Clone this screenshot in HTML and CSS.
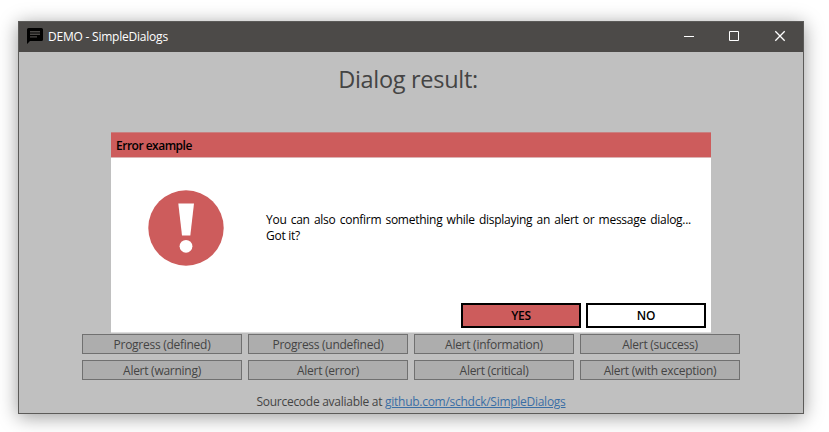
FILE: index.html
```html
<!DOCTYPE html>
<html lang="en">
<head>
<meta charset="utf-8">
<title>DEMO - SimpleDialogs</title>
<link rel="stylesheet" href="styles.css">
</head>
<body>
<main class="window">
  <header class="titlebar">
    <svg class="app-icon" width="16" height="16" viewBox="0 0 16 16"><path d="M1.500 0h13A1.500 1.500 0 0 1 16 1.500v10A1.500 1.500 0 0 1 14.500 13H3l-3 3V1.500A1.500 1.500 0 0 1 1.500 0z" fill="#000"/><path d="M3 3.700h10M3 6.300h10M3 8.900h7" stroke="#4c4a48" stroke-width="1.400"/></svg>
    <span class="app-title">DEMO - SimpleDialogs</span>
    <div class="controls">
      <svg width="46" height="30" viewBox="0 0 46 30"><path d="M18 14.500h10" stroke="#fff"/></svg>
      <svg width="46" height="30" viewBox="0 0 46 30"><path d="M17.500 9.500h9v9h-9z" stroke="#fff" fill="none"/></svg>
      <svg width="46" height="30" viewBox="0 0 46 30"><path d="M17.300 9.300l9.400 9.400M26.700 9.300l-9.400 9.400" stroke="#fff" stroke-width="1.300"/></svg>
    </div>
  </header>
  <section class="content">
    <h1 class="result">Dialog result:</h1>
    <div class="actions">
      <button>Progress (defined)</button>
      <button>Progress (undefined)</button>
      <button>Alert (information)</button>
      <button>Alert (success)</button>
      <button>Alert (warning)</button>
      <button>Alert (error)</button>
      <button>Alert (critical)</button>
      <button>Alert (with exception)</button>
    </div>
    <p class="source">Sourcecode avaliable at <a href="#">github.com/schdck/SimpleDialogs</a></p>
  </section>
  <section class="dialog">
    <h2 class="dialog-title">Error example</h2>
    <div class="dialog-body">
      <svg class="alert-icon" width="76" height="76" viewBox="0 0 76 76"><circle cx="38" cy="38" r="37.700" fill="#cd5c5c"/><path d="M30.300 13.500h15.700l-3.700 32h-8.300z" fill="#fff"/><circle cx="38" cy="56.300" r="6.400" fill="#fff"/></svg>
      <p class="message"><span class="line">You can also confirm something while displaying an alert or message dialog...</span><span class="last">Got it?</span></p>
    </div>
    <div class="dialog-buttons">
      <button class="yes">YES</button>
      <button class="no">NO</button>
    </div>
  </section>
</main>
</body>
</html>
```
FILE: styles.css
```css
* { box-sizing: border-box; }
body {
  margin: 0;
  padding: 21px 0 0 18px;
  height: 432px;
  overflow: hidden;
  background: #fff;
  font-family: "Open Sans", "Noto Sans", sans-serif;
  font-size: 12px;
  letter-spacing: -0.27px;
}
button { font: inherit; letter-spacing: inherit; padding: 0; margin: 0; border-radius: 0; }
h1, h2, p { margin: 0; font-weight: 400; }
.window {
  position: relative;
  display: flex;
  flex-direction: column;
  width: 786px;
  height: 393px;
  border: 1px solid #5c5b59;
  background: #c0c0c0;
  box-shadow: 0 3px 18px rgba(0, 0, 0, .4);
}
.titlebar {
  display: flex;
  align-items: center;
  height: 30px;
  padding-left: 8px;
  background: #4c4a48;
  color: #fff;
}
.app-icon { margin: -2px 5px 0 0; }
.app-title { flex: 1; margin-top: -1px; letter-spacing: -0.22px; }
.controls { display: flex; margin-right: -1px; }
.content {
  flex: 1;
  display: flex;
  flex-direction: column;
  align-items: center;
  color: #444;
}
.result {
  font-size: 23.5px;
  line-height: 32px;
  letter-spacing: -0.3px;
  margin: 11px 6px 0 0;
}
.actions {
  display: grid;
  grid-template-columns: repeat(4, 160px);
  gap: 6px;
  margin-top: auto;
  align-self: flex-start;
  margin-left: 63px;
}
.actions button {
  height: 20px;
  padding-top: 2px;
  border: 1px solid #707070;
  background: #adadad;
  color: #444;
  line-height: 16px;
}
.source {
  line-height: 16px;
  margin: 14px 0 3px;
}
.source a { color: #3a6ea5; }
.dialog {
  position: absolute;
  left: 92px;
  top: 110px;
  width: 600px;
  height: 201px;
  display: flex;
  flex-direction: column;
  background: #fff;
  border-bottom: 1px solid #dcdcdc;
  color: #000;
}
.dialog-title {
  height: 26px;
  padding-left: 5px;
  border-top: 1px solid #c98080;
  border-bottom: 1px solid #dcb4b4;
  background: #cd5c5c;
  font-size: 12px;
  font-weight: 600;
  line-height: 25px;
  letter-spacing: -0.5px;
}
.dialog-body {
  flex: 1;
  display: flex;
  align-items: center;
  padding: 0 0 6px 37px;
}
.message {
  width: 425px;
  margin-left: 42px;
  padding-top: 1px;
  line-height: 16px;
}
.line { display: block; text-align-last: justify; white-space: nowrap; }
.dialog-buttons {
  display: flex;
  justify-content: flex-end;
  gap: 5px;
  padding: 0 5px 4px 0;
}
.dialog-buttons button {
  width: 120px;
  height: 25px;
  border: 2px solid #000;
  background: #fff;
  color: #000;
  font-weight: 600;
}
.dialog-buttons .yes { background: #cd5c5c; }
```
